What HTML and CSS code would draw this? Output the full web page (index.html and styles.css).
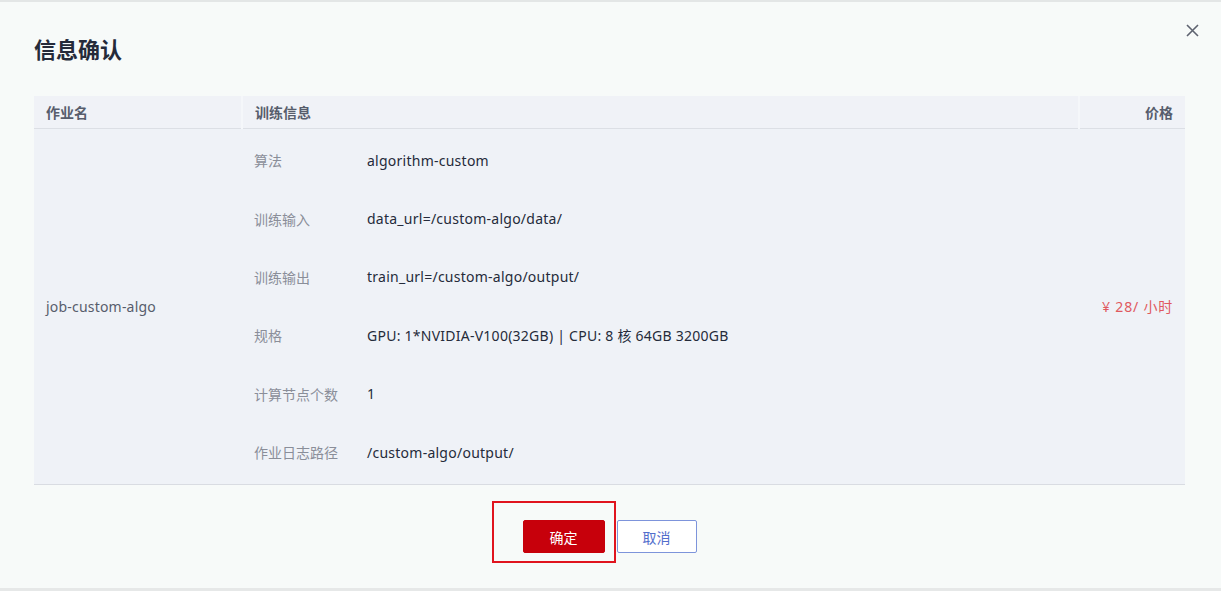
FILE: index.html
```html
<!doctype html>
<html lang="zh-CN">
    <head>
        <meta charset="UTF-8" />
        <meta name="viewport" content="width=device-width, initial-scale=1.0" />
        <title>信息确认</title>
        <link rel="stylesheet" href="styles.css">
    </head>
    <body>
        <div class="dialog">
            <div class="dialog-header">
                <h2>信息确认</h2>
                <button class="close" aria-label="关闭">
                    <svg width="13" height="13" viewBox="0 0 13 13">
                        <path d="M1 1 L12 12 M12 1 L1 12" stroke="#5e6370" stroke-width="1.6" fill="none" />
                    </svg>
                </button>
            </div>
            <table class="confirm-table">
                <thead>
                    <tr>
                        <th class="col-name">作业名</th>
                        <th class="col-info">训练信息</th>
                        <th class="col-price">价格</th>
                    </tr>
                </thead>
                <tbody>
                    <tr>
                        <td class="col-name job">job-custom-algo</td>
                        <td class="col-info">
                            <div class="info-list">
                                <div class="info-row"><span class="label">算法</span><span class="value">algorithm-custom</span></div>
                                <div class="info-row"><span class="label">训练输入</span><span class="value">data_url=/custom-algo/data/</span></div>
                                <div class="info-row"><span class="label">训练输出</span><span class="value">train_url=/custom-algo/output/</span></div>
                                <div class="info-row"><span class="label">规格</span><span class="value">GPU: 1*NVIDIA-V100(32GB) | CPU: 8 核 64GB 3200GB</span></div>
                                <div class="info-row"><span class="label">计算节点个数</span><span class="value">1</span></div>
                                <div class="info-row"><span class="label">作业日志路径</span><span class="value">/custom-algo/output/</span></div>
                            </div>
                        </td>
                        <td class="col-price price">¥ 28/ 小时</td>
                    </tr>
                </tbody>
            </table>
            <div class="dialog-footer">
                <div class="ok-wrap">
                    <button class="btn btn-primary">确定</button>
                    <span class="highlight"></span>
                </div>
                <button class="btn btn-default">取消</button>
            </div>
        </div>
    </body>
</html>
```

FILE: styles.css
```css
html,
body {
    margin: 0;
    padding: 0;
}
body {
    font-family: "Noto Sans", "Noto Sans CJK SC", sans-serif;
    font-size: 14px;
    color: #252b3a;
    background: #f6f9f8;
}
.dialog {
    height: 591px;
    box-sizing: border-box;
    border-top: 2px solid #e3e6e6;
    border-bottom: 3px solid #e6e8e8;
    padding: 0 36px 0 34px;
    background: #f7faf9;
}
.dialog-header {
    display: flex;
    justify-content: space-between;
    align-items: flex-start;
    height: 94px;
}
.dialog-header h2 {
    margin: 32px 0 0;
    font-size: 22px;
    line-height: 30px;
    font-weight: bold;
    color: #252b3a;
}
.close {
    margin: 22px -14px 0 0;
    padding: 0;
    border: none;
    background: none;
    cursor: pointer;
    width: 13px;
    height: 13px;
}
.confirm-table {
    width: 100%;
    border-collapse: collapse;
    background: #eff2f7;
}
.confirm-table th {
    height: 32px;
    padding: 0 12px;
    font-size: 14px;
    font-weight: bold;
    color: #575d6c;
    text-align: left;
    background: #f0f2f7;
    border-bottom: 1px solid #dcdfe5;
}
.confirm-table th + th {
    border-left: 2px solid #f5f7fa;
}
.confirm-table td {
    padding: 2px 12px 3px;
    vertical-align: middle;
    border-bottom: 1px solid #d9dce2;
}
.col-name {
    width: 183px;
}
.col-price {
    width: 81px;
}
.confirm-table .col-price {
    text-align: right;
}
.job {
    color: #575d6c;
    letter-spacing: 0.2px;
}
.price {
    color: #e0595e;
    letter-spacing: 0.8px;
}
.info-row {
    display: flex;
    align-items: center;
    height: 58.4px;
}
.label {
    width: 113px;
    color: #8a8e99;
}
.value {
    color: #252b3a;
    letter-spacing: 0.25px;
}
.dialog-footer {
    display: flex;
    justify-content: center;
    gap: 12px;
    margin-top: 35px;
}
.ok-wrap {
    position: relative;
}
.btn {
    height: 33px;
    box-sizing: border-box;
    padding: 0;
    font-family: inherit;
    font-size: 14px;
    border-radius: 2px;
    cursor: pointer;
}
.btn-primary {
    width: 82px;
    color: #fff;
    background: #c7000b;
    border: 1px solid #c7000b;
}
.btn-default {
    width: 80px;
    color: #526ecc;
    background: #fff;
    border: 1px solid #7d94db;
}
.highlight {
    position: absolute;
    left: -31px;
    top: -19px;
    width: 124px;
    height: 62px;
    box-sizing: border-box;
    border: 2px solid #e0141e;
    pointer-events: none;
}
```
